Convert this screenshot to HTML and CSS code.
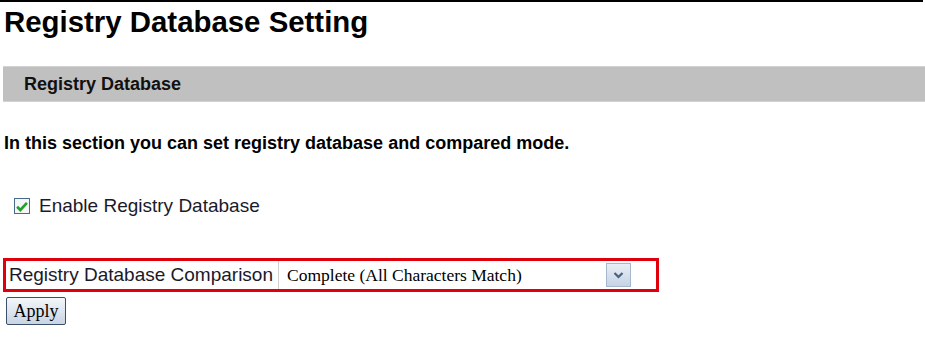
FILE: index.html
```html
<!DOCTYPE html>
<html>
<head>
<meta charset="utf-8">
<link rel="stylesheet" href="styles.css">
</head>
<body>
<div class="topline"></div>
<h1 class="title">Registry Database Setting</h1>
<div class="bar">Registry Database</div>
<p class="desc">In this section you can set registry database and compared mode.</p>
<label class="check">
  <span class="box"><svg width="12" height="11" viewBox="0 0 11 10"><path d="M1 5.2 L4 8.2 L10 1.6" fill="none" stroke="#1fa12a" stroke-width="2.4"/></svg></span>
  <span>Enable Registry Database</span>
</label>
<div class="row">
  <div class="lbl">Registry Database Comparison</div>
  <div class="sel">
    <span class="seltext">Complete (All Characters Match)</span>
    <span class="arrow"><svg width="11" height="8" viewBox="0 0 11 8"><path d="M1.5 2 L5.5 6 L9.5 2" fill="none" stroke="#4b5f7f" stroke-width="2.2"/></svg></span>
  </div>
</div>
<button class="apply">Apply</button>
</body>
</html>
```
FILE: styles.css
```css
html, body { margin: 0; padding: 0; background: #fff; }
body { width: 925px; height: 342px; overflow: hidden; font-family: "Liberation Sans", Arial, sans-serif; color: #111; }
.topline { height: 2px; background: #000; width: 923px; }
.title { margin: 0; padding: 3px 0 0 4px; font-size: 29.4px; line-height: 34px; font-weight: bold; color: #000; height: 60px; box-sizing: border-box; }
.bar { margin: 4px 0 0 3px; height: 36px; box-sizing: border-box; background: #c0c0c0; border-top: 1px solid #d2d2d2; border-bottom: 1px solid #d2d2d2; padding-left: 21px; font-size: 18px; font-weight: bold; line-height: 34px; color: #111; }
.desc { margin: 0; padding: 32px 0 0 4px; font-size: 18px; font-weight: bold; line-height: 18px; color: #000; }
.check { display: flex; align-items: center; gap: 9px; margin: 45px 0 0 14px; font-size: 19px; line-height: 18px; color: #1a1a2a; }
.box { width: 16px; height: 16px; box-sizing: border-box; border: 1px solid #4a6a8a; background: #f4f6f8; display: flex; align-items: center; justify-content: center; }
.row { display: flex; align-items: center; margin: 43px 0 0 3px; width: 656px; height: 34px; box-sizing: border-box; border: 3px solid #e0000b; }
.lbl { padding-left: 3px; width: 273px; box-sizing: border-box; font-size: 19px; color: #1a1a2a; height: 28px; line-height: 28px; border-right: 1px solid #d0d0d0; white-space: nowrap; }
.sel { display: flex; align-items: center; margin-left: 8px; width: 344px; height: 28px; }
.seltext { flex: 1; font-family: "Liberation Serif", "Times New Roman", serif; font-size: 17.5px; color: #000; }
.arrow { width: 25px; height: 24px; box-sizing: border-box; border: 1px solid #a8b8cc; background: linear-gradient(#e8eef6, #c6d4e6); display: flex; align-items: center; justify-content: center; }
.apply { display: block; margin: 5px 0 0 6px; width: 60px; height: 28px; padding: 0; font-family: "Liberation Serif", "Times New Roman", serif; font-size: 18px; color: #000; border: 1px solid #3c4f6a; border-radius: 2px; background: linear-gradient(#f4f7fb, #c8d4e4); }
```
